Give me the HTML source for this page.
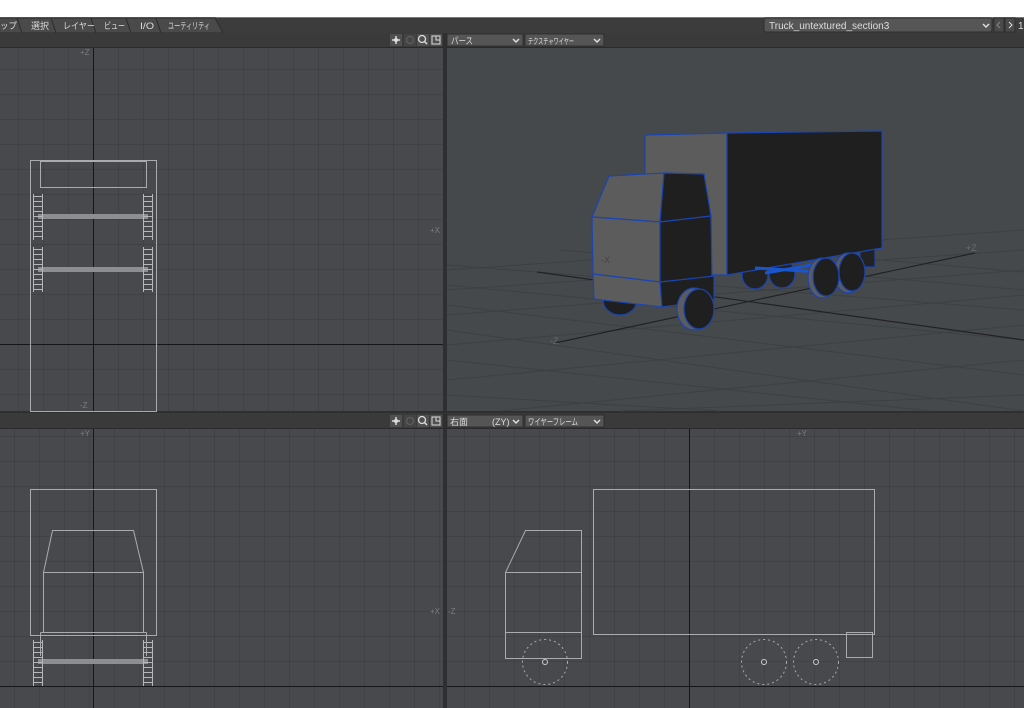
<!DOCTYPE html>
<html><head><meta charset="utf-8"><style>
body{margin:0;width:1024px;height:708px;overflow:hidden;background:#fff;font-family:"Liberation Sans","Noto Sans CJK JP",sans-serif;}
svg{display:block}
</style></head><body>
<svg width="1024" height="708" xmlns="http://www.w3.org/2000/svg" font-family="Liberation Sans, Noto Sans CJK JP, sans-serif">
<defs>
<pattern id="gA" x="18" y="44" width="25" height="25" patternUnits="userSpaceOnUse"><rect width="25" height="25" fill="#47494c"/><path d="M0 0H25M0 0V25" stroke="#3a3c3f" stroke-width="1"/></pattern>
<pattern id="gB" x="14" y="11" width="25" height="25" patternUnits="userSpaceOnUse"><rect width="25" height="25" fill="#47494c"/><path d="M0 0H25M0 0V25" stroke="#3a3c3f" stroke-width="1"/></pattern>
</defs>
<rect x="0" y="0" width="1024" height="17" fill="#fff"/>
<rect x="0" y="17" width="1024" height="16" fill="#3c3c3c"/>
<line x1="0" y1="17.5" x2="1024" y2="17.5" stroke="#777"/>
<g fill="#4a4a4a" stroke="#2c2c2c">
<path d="M-5 33L-2 18H18L24 33Z"/>
<path d="M22 33L17 18H53L60 33Z"/>
<path d="M56 33L51 18H93L100 33Z"/>
<path d="M96 33L91 18H128L135 33Z"/>
<path d="M131 33L126 18H158L165 33Z"/>
<path d="M161 33L156 18H215L223 33Z"/>
</g>
<g fill="#ddd" font-size="9">
<text x="0" y="29" textLength="17" lengthAdjust="spacingAndGlyphs">ップ</text>
<text x="31" y="29" textLength="18" lengthAdjust="spacingAndGlyphs">選択</text>
<text x="63" y="29" textLength="32" lengthAdjust="spacingAndGlyphs">レイヤー</text>
<text x="104" y="29" textLength="21" lengthAdjust="spacingAndGlyphs">ビュー</text>
<text x="140" y="29" textLength="14" lengthAdjust="spacingAndGlyphs">I/O</text>
<text x="168" y="29" textLength="42" lengthAdjust="spacingAndGlyphs">ユーティリティ</text>
</g>
<rect x="764" y="18" width="228" height="14" rx="2" fill="#565656" stroke="#2e2e2e"/>
<text x="769" y="29" fill="#ddd" font-size="10">Truck_untextured_section3</text>
<path d="M983 24L986 27L989 24" stroke="#ddd" stroke-width="1.5" fill="none"/>
<rect x="994" y="18" width="10" height="14" fill="#4a4a4a" stroke="#2e2e2e"/><path d="M1000 22L997 25L1000 28" stroke="#888" fill="none"/>
<rect x="1005" y="18" width="10" height="14" fill="#4a4a4a" stroke="#2e2e2e"/><path d="M1009 22L1012 25L1009 28" stroke="#ddd" fill="none"/>
<text x="1018" y="29" fill="#ddd" font-size="10">1</text>
<rect x="0" y="33" width="1024" height="15" fill="#3a3a3a"/>
<rect x="0" y="47" width="1024" height="1" fill="#2a2a2a"/>
<rect x="0" y="48" width="443" height="364" fill="url(#gA)"/>
<rect x="447" y="48" width="577" height="364" fill="#46494c"/>
<rect x="0" y="412" width="1024" height="17" fill="#3a3a3a"/>
<rect x="0" y="429" width="443" height="279" fill="url(#gB)"/>
<rect x="447" y="429" width="577" height="279" fill="url(#gB)"/>
<rect x="443" y="33" width="4" height="675" fill="#2e2f31"/>
<rect x="0" y="411" width="1024" height="2" fill="#2e2f31"/>
<rect x="0" y="428" width="1024" height="1" fill="#2a2a2a"/>
<g>
<rect x="390" y="34" width="12" height="12" fill="#505050"/><path d="M396 36V44M392 40H400" stroke="#ddd" stroke-width="1.5"/><circle cx="396" cy="40" r="2" fill="#ddd"/>
<rect x="404" y="34" width="12" height="12" fill="#444"/><circle cx="410" cy="40" r="3.5" fill="none" stroke="#5e5e5e" stroke-width="1.3"/>
<rect x="417" y="34" width="12" height="12" fill="#505050"/><circle cx="422" cy="39" r="3.5" fill="none" stroke="#ddd" stroke-width="1.3"/><path d="M424.5 41.5L427 44" stroke="#ddd" stroke-width="1.5"/>
<rect x="430" y="34" width="12" height="12" fill="#505050"/><rect x="432" y="36" width="8" height="8" fill="none" stroke="#ddd"/><path d="M436 36V40H440" fill="none" stroke="#ddd"/>
<rect x="447" y="34" width="76" height="12" fill="#555" stroke="#2e2e2e"/><text x="451" y="44" fill="#ddd" font-size="9" textLength="22" lengthAdjust="spacingAndGlyphs">パース</text><path d="M513 39L516 42L519 39" stroke="#ddd" stroke-width="1.5" fill="none"/>
<rect x="525" y="34" width="79" height="12" fill="#555" stroke="#2e2e2e"/><text x="528" y="44" fill="#ddd" font-size="8" textLength="46" lengthAdjust="spacingAndGlyphs">テクスチャワイヤー</text><path d="M594 39L597 42L600 39" stroke="#ddd" stroke-width="1.5" fill="none"/>
</g>
<g transform="translate(0,381)">
<rect x="390" y="34" width="12" height="12" fill="#505050"/><path d="M396 36V44M392 40H400" stroke="#ddd" stroke-width="1.5"/><circle cx="396" cy="40" r="2" fill="#ddd"/>
<rect x="404" y="34" width="12" height="12" fill="#444"/><circle cx="410" cy="40" r="3.5" fill="none" stroke="#5e5e5e" stroke-width="1.3"/>
<rect x="417" y="34" width="12" height="12" fill="#505050"/><circle cx="422" cy="39" r="3.5" fill="none" stroke="#ddd" stroke-width="1.3"/><path d="M424.5 41.5L427 44" stroke="#ddd" stroke-width="1.5"/>
<rect x="430" y="34" width="12" height="12" fill="#505050"/><rect x="432" y="36" width="8" height="8" fill="none" stroke="#ddd"/><path d="M436 36V40H440" fill="none" stroke="#ddd"/>
<rect x="447" y="34" width="76" height="12" fill="#555" stroke="#2e2e2e"/><text x="450" y="44" fill="#ddd" font-size="9">右面</text><text x="492" y="44" fill="#ddd" font-size="9">(ZY)</text><path d="M513 39L516 42L519 39" stroke="#ddd" stroke-width="1.5" fill="none"/>
<rect x="525" y="34" width="79" height="12" fill="#555" stroke="#2e2e2e"/><text x="528" y="44" fill="#ddd" font-size="9" textLength="50" lengthAdjust="spacingAndGlyphs">ワイヤーフレーム</text><path d="M594 39L597 42L600 39" stroke="#ddd" stroke-width="1.5" fill="none"/>
</g>
<g stroke="#151617" stroke-width="1">
<line x1="93.5" y1="48" x2="93.5" y2="411"/><line x1="0" y1="344.5" x2="443" y2="344.5"/>
<line x1="93.5" y1="429" x2="93.5" y2="708"/><line x1="0" y1="686.5" x2="443" y2="686.5"/>
<line x1="689.5" y1="429" x2="689.5" y2="708"/><line x1="447" y1="686.5" x2="1024" y2="686.5"/>
</g>
<g fill="#7a7c7f" font-size="8">
<text x="80" y="55">+Z</text><text x="80" y="408">-Z</text><text x="430" y="233">+X</text>
<text x="80" y="436">+Y</text><text x="430" y="614">+X</text><text x="448" y="614">-Z</text><text x="797" y="436">+Y</text>
</g>
<g stroke="#a9abad" fill="none" stroke-width="1">
<rect x="30.5" y="160.5" width="126" height="251"/>
<rect x="40.5" y="161.5" width="106" height="26"/>
</g>
<g fill="#8c8e90"><rect x="38" y="214" width="110" height="5"/><rect x="38" y="267" width="110" height="5"/><rect x="38" y="659" width="110" height="5"/></g>
<g stroke="#b5b7b9" stroke-width="1" fill="none">
<path d="M33.5 194V240M42.5 194V240M143.5 194V240M152.5 194V240M33.5 247V292M42.5 247V292M143.5 247V292M152.5 247V292M33.5 640V686M42.5 640V686M143.5 640V686M152.5 640V686"/>
<path stroke-dasharray="1 4" stroke-width="9" d="M38 196V240M148 196V240M38 249V292M148 249V292M38 642V686M148 642V686"/>
</g>
<g stroke="#a9abad" fill="none">
<rect x="30.5" y="489.5" width="126" height="146"/>
<path d="M52.5 530.5H133.5L143.5 572.5H43.5Z"/>
<path d="M43.5 572.5V632.5M143.5 572.5V632.5M40.5 632.5H146.5M40.5 632.5V656M146.5 632.5V656"/>
</g>
<g stroke="#a9abad" fill="none">
<rect x="593.5" y="489.5" width="281" height="145"/>
<path d="M525.5 530.5H581.5V658.5H505.5V572.5Z M505.5 572.5H581.5M505.5 632.5H581.5"/>
<rect x="846.5" y="632.5" width="26" height="25"/>
<g stroke-dasharray="2 3"><circle cx="545" cy="662" r="22.5"/><circle cx="764" cy="662" r="22.5"/><circle cx="816" cy="662" r="22.5"/></g>
<g fill="none" stroke="#ccc"><circle cx="545" cy="662" r="2.5"/><circle cx="764" cy="662" r="2.5"/><circle cx="816" cy="662" r="2.5"/></g>
</g>
<g stroke="#3d4043" stroke-width="1" fill="none">
<path d="M447 270L1024 230M447 290L1024 250M447 315L1024 270M447 345L1024 295M447 380L1024 325M500 411L1024 360M620 411L1024 395"/>
<path d="M447 265L1024 310M447 285L1024 340M447 305L1024 375M447 330L1024 411M447 360L930 411M447 395L720 411M560 250L1024 290M640 240L1024 272"/>
</g>
<g stroke="#222" stroke-width="1.2"><line x1="555" y1="343" x2="975" y2="253"/><line x1="537" y1="272" x2="1024" y2="340"/></g>
<text x="550" y="344" fill="#6a6c6e" font-size="9">-Z</text><text x="966" y="251" fill="#6a6c6e" font-size="9">+Z</text>
<g stroke="#1a44b0" stroke-width="1.2">
<ellipse cx="755" cy="275" rx="13" ry="14" fill="#222"/>
<ellipse cx="782" cy="274" rx="13" ry="14" fill="#222"/>
<rect x="860" y="245" width="15" height="22" fill="#222"/>
<path d="M645 135L727 133V275L645 275Z" fill="#5c5c5c"/>
<path d="M727 133L882 131V248L727 275Z" fill="#1f1f1f"/>
<path d="M755 268L820 272M765 273L830 262" stroke="#1a55d0" stroke-width="3"/>
<ellipse cx="848" cy="273" rx="14" ry="20" fill="#5c5c5c"/><ellipse cx="852" cy="272" rx="13" ry="19" fill="#1f1f1f"/>
<ellipse cx="822" cy="278" rx="14" ry="20" fill="#5c5c5c"/><ellipse cx="826" cy="277" rx="13" ry="19" fill="#1f1f1f"/>
<ellipse cx="620" cy="300" rx="17" ry="15" fill="#1f1f1f"/>
<path d="M609 176L664 173L660 222L592 217Z" fill="#5c5c5c"/>
<path d="M592 217L660 222V282L593 274Z" fill="#5c5c5c"/>
<path d="M593 274L660 282L662 307L594 299Z" fill="#5c5c5c"/>
<path d="M664 173L704 174L711 216L660 222Z" fill="#1f1f1f"/>
<path d="M660 222L711 216L712 283L660 282Z" fill="#1f1f1f"/>
<path d="M660 282L714 276L714 300L662 307Z" fill="#1f1f1f"/>
<ellipse cx="694" cy="309" rx="17" ry="21" fill="#5c5c5c"/><ellipse cx="699" cy="309" rx="15" ry="20" fill="#1f1f1f"/>
</g>
<text x="601" y="263" fill="#444" font-size="9">-X</text>
</svg>
</body></html>
